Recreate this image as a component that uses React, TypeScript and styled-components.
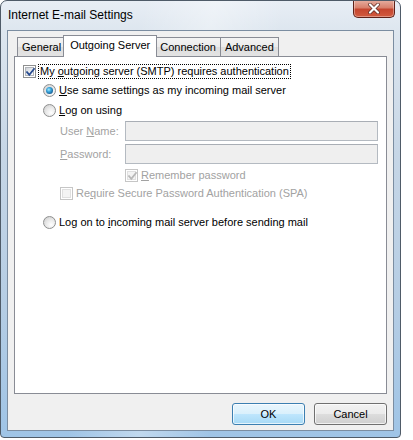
import React from "react";
import styled, { createGlobalStyle } from "styled-components";

const Global = createGlobalStyle`
  html, body { margin: 0; padding: 0; background: #ffffff; }
  body {
    font-family: "Liberation Sans", Arial, sans-serif;
    font-size: 11px;
    color: #000;
  }
`;

const Window = styled.div`
  width: 401px;
  height: 438px;
  box-sizing: border-box;
  border: 1px solid #4f5b68;
  border-radius: 7px 7px 4px 4px;
  background:
    linear-gradient(100deg, rgba(255,255,255,0) 30%, rgba(255,255,255,0.35) 45%, rgba(255,255,255,0) 60%),
    linear-gradient(180deg, #e8eef5 0%, #dde6ef 7%, #c6d6e6 35%, #b5cde4 70%, #9fc4e6 100%);
  display: flex;
  flex-direction: column;
  overflow: hidden;
`;

const TitleBar = styled.div`
  height: 29px;
  flex: none;
  display: flex;
  justify-content: space-between;
  align-items: flex-start;
`;

const Title = styled.div`
  padding: 7px 0 0 7px;
  font-size: 12px;
  line-height: 14px;
  color: #000;
`;

const CloseButton = styled.div`
  width: 42px;
  height: 18px;
  margin: -1px 5px 0 0;
  box-sizing: border-box;
  border: 1px solid #5e2118;
  border-top: none;
  border-radius: 0 0 5px 5px;
  background: linear-gradient(180deg, #e7b0a2 0%, #d8806c 45%, #c5462f 55%, #d25b3f 100%);
  box-shadow: inset 0 0 0 1px rgba(255, 255, 255, 0.35);
  display: flex;
  align-items: center;
  justify-content: center;
`;

const Client = styled.div`
  flex: 1;
  margin: 0 6px 6px 6px;
  border: 1px solid #7b8da1;
  background: #f0f0f0;
  padding: 4px 6px 0 6px;
  display: flex;
  flex-direction: column;
`;

const TabStrip = styled.div`
  display: flex;
  align-items: flex-end;
  height: 22px;
  padding-left: 3px;
  margin-bottom: -1px;
  position: relative;
  z-index: 1;
`;

const Tab = styled.div<{ $active?: boolean }>`
  box-sizing: border-box;
  height: ${(p) => (p.$active ? "22px" : "20px")};
  padding: ${(p) => (p.$active ? "0 6px" : "0 4px")};
  margin: ${(p) => (p.$active ? "0 -2px 0 -2px" : "0 -1px 0 0")};
  border: 1px solid #898c95;
  border-bottom: ${(p) => (p.$active ? "none" : "1px solid #898c95")};
  background: ${(p) =>
    p.$active ? "#ffffff" : "linear-gradient(180deg, #f3f3f3 0%, #ebebeb 50%, #dedede 51%, #e3e3e3 100%)"};
  line-height: ${(p) => (p.$active ? "19px" : "18px")};
  position: relative;
  z-index: ${(p) => (p.$active ? 2 : 1)};
  white-space: nowrap;
`;

const Panel = styled.div`
  height: 338px;
  box-sizing: border-box;
  border: 1px solid #898c95;
  background: #ffffff;
  padding: 7px 8px;
  display: flex;
  flex-direction: column;
`;

const Row = styled.div<{ $indent?: number; $top?: number }>`
  display: flex;
  align-items: center;
  height: 15px;
  margin-left: ${(p) => p.$indent ?? 0}px;
  margin-top: ${(p) => p.$top ?? 0}px;
`;

const FieldRow = styled.div<{ $top?: number }>`
  display: flex;
  align-items: center;
  height: 20px;
  margin-left: 37px;
  margin-top: ${(p) => p.$top ?? 0}px;
`;

const Label = styled.span<{ $disabled?: boolean; $focus?: boolean }>`
  margin-left: ${(p) => (p.$focus ? "2px" : "3px")};
  color: ${(p) => (p.$disabled ? "#a2a2a2" : "#000")};
  white-space: nowrap;
  box-sizing: border-box;
  height: 15px;
  line-height: ${(p) => (p.$focus ? "13px" : "15px")};
  padding: 0 ${(p) => (p.$focus ? "1px" : "0")};
  border: ${(p) => (p.$focus ? "1px dotted #000" : "none")};
`;

const FieldLabel = styled.span`
  width: 65px;
  flex: none;
  color: #a2a2a2;
`;

const Input = styled.div`
  width: 253px;
  height: 20px;
  box-sizing: border-box;
  border: 1px solid #b4bac1;
  border-top-color: #a9aeb5;
  background: #efefef;
`;

const Key = styled.span`
  text-decoration: underline;
`;

const BoxOuter = styled.span<{ $disabled?: boolean }>`
  width: 13px;
  height: 13px;
  flex: none;
  box-sizing: border-box;
  border: 1px solid ${(p) => (p.$disabled ? "#c6c6c6" : "#8e8f8f")};
  background: #ffffff;
  padding: 1px;
  display: flex;
  position: relative;
`;

const BoxInner = styled.span<{ $disabled?: boolean }>`
  flex: 1;
  border: 1px solid ${(p) => (p.$disabled ? "#e0e0e0" : "#b1b5ba")};
  background: ${(p) =>
    p.$disabled ? "#f4f4f4" : "linear-gradient(135deg, #cfd3d8 0%, #eef0f2 60%, #fbfbfb 100%)"};
`;

const CheckMark = styled.svg`
  position: absolute;
  left: 0;
  top: 0;
`;

const RadioOuter = styled.span`
  width: 13px;
  height: 13px;
  flex: none;
  box-sizing: border-box;
  border-radius: 50%;
  border: 1px solid #8e8f8f;
  background: radial-gradient(circle at 65% 70%, #ffffff 0%, #eaeaea 45%, #c9c9c9 100%);
  display: flex;
  align-items: center;
  justify-content: center;
`;

const RadioDot = styled.span`
  width: 7px;
  height: 7px;
  border-radius: 50%;
  background: radial-gradient(circle at 40% 38%, #a8ecff 0%, #3aa6dc 35%, #165d93 75%, #0e3c66 100%);
`;

const ButtonRow = styled.div`
  display: flex;
  justify-content: flex-end;
  gap: 9px;
  margin-top: 9px;
`;

const Button = styled.div<{ $default?: boolean }>`
  width: 73px;
  height: 22px;
  box-sizing: border-box;
  border: 1px solid ${(p) => (p.$default ? "#3c7fb1" : "#707070")};
  border-radius: 3px;
  background: ${(p) =>
    p.$default
      ? "linear-gradient(180deg, #eaf6fd 0%, #d9f0fc 50%, #bee6fd 51%, #a7d9f5 100%)"
      : "linear-gradient(180deg, #f2f2f2 0%, #ebebeb 50%, #dddddd 51%, #cfcfcf 100%)"};
  box-shadow: inset 0 0 0 1px rgba(255, 255, 255, 0.7);
  display: flex;
  align-items: center;
  justify-content: center;
  color: #000;
`;

function Checkbox({ checked, disabled }: { checked?: boolean; disabled?: boolean }) {
  return (
    <BoxOuter $disabled={disabled}>
      <BoxInner $disabled={disabled} />
      {checked && (
        <CheckMark width="13" height="13" viewBox="0 0 13 13">
          <path
            d="M3 6.2 L5.3 8.8 L10 3"
            fill="none"
            stroke={disabled ? "#b9b9b9" : "#2a4d91"}
            strokeWidth="1.8"
            strokeLinecap="square"
          />
        </CheckMark>
      )}
    </BoxOuter>
  );
}

function Radio({ checked }: { checked?: boolean }) {
  return <RadioOuter>{checked && <RadioDot />}</RadioOuter>;
}

export default function App() {
  return (
    <>
      <Global />
      <Window>
        <TitleBar>
          <Title>Internet E-mail Settings</Title>
          <CloseButton>
            <svg width="14" height="11" viewBox="0 0 14 11">
              <path d="M3 1.5 L11 9.5 M11 1.5 L3 9.5" stroke="#5a2a22" strokeWidth="3.6" strokeLinecap="round" />
              <path d="M3 1.5 L11 9.5 M11 1.5 L3 9.5" stroke="#ffffff" strokeWidth="2.2" strokeLinecap="round" />
            </svg>
          </CloseButton>
        </TitleBar>
        <Client>
          <TabStrip>
            <Tab>General</Tab>
            <Tab $active>Outgoing Server</Tab>
            <Tab>Connection</Tab>
            <Tab>Advanced</Tab>
          </TabStrip>
          <Panel>
            <Row>
              <Checkbox checked />
              <Label $focus>
                My <Key>o</Key>utgoing server (SMTP) requires authentication
              </Label>
            </Row>
            <Row $indent={20} $top={4}>
              <Radio checked />
              <Label>
                <Key>U</Key>se same settings as my incoming mail server
              </Label>
            </Row>
            <Row $indent={20} $top={5}>
              <Radio />
              <Label>
                <Key>L</Key>og on using
              </Label>
            </Row>
            <FieldRow $top={3}>
              <FieldLabel>
                User <Key>N</Key>ame:
              </FieldLabel>
              <Input />
            </FieldRow>
            <FieldRow $top={3}>
              <FieldLabel>
                <Key>P</Key>assword:
              </FieldLabel>
              <Input />
            </FieldRow>
            <Row $indent={102} $top={4}>
              <Checkbox checked disabled />
              <Label $disabled>
                <Key>R</Key>emember password
              </Label>
            </Row>
            <Row $indent={37} $top={3}>
              <Checkbox disabled />
              <Label $disabled>
                Re<Key>q</Key>uire Secure Password Authentication (SPA)
              </Label>
            </Row>
            <Row $indent={20} $top={14}>
              <Radio />
              <Label>
                Log on to <Key>i</Key>ncoming mail server before sending mail
              </Label>
            </Row>
          </Panel>
          <ButtonRow>
            <Button $default>OK</Button>
            <Button>Cancel</Button>
          </ButtonRow>
        </Client>
      </Window>
    </>
  );
}
